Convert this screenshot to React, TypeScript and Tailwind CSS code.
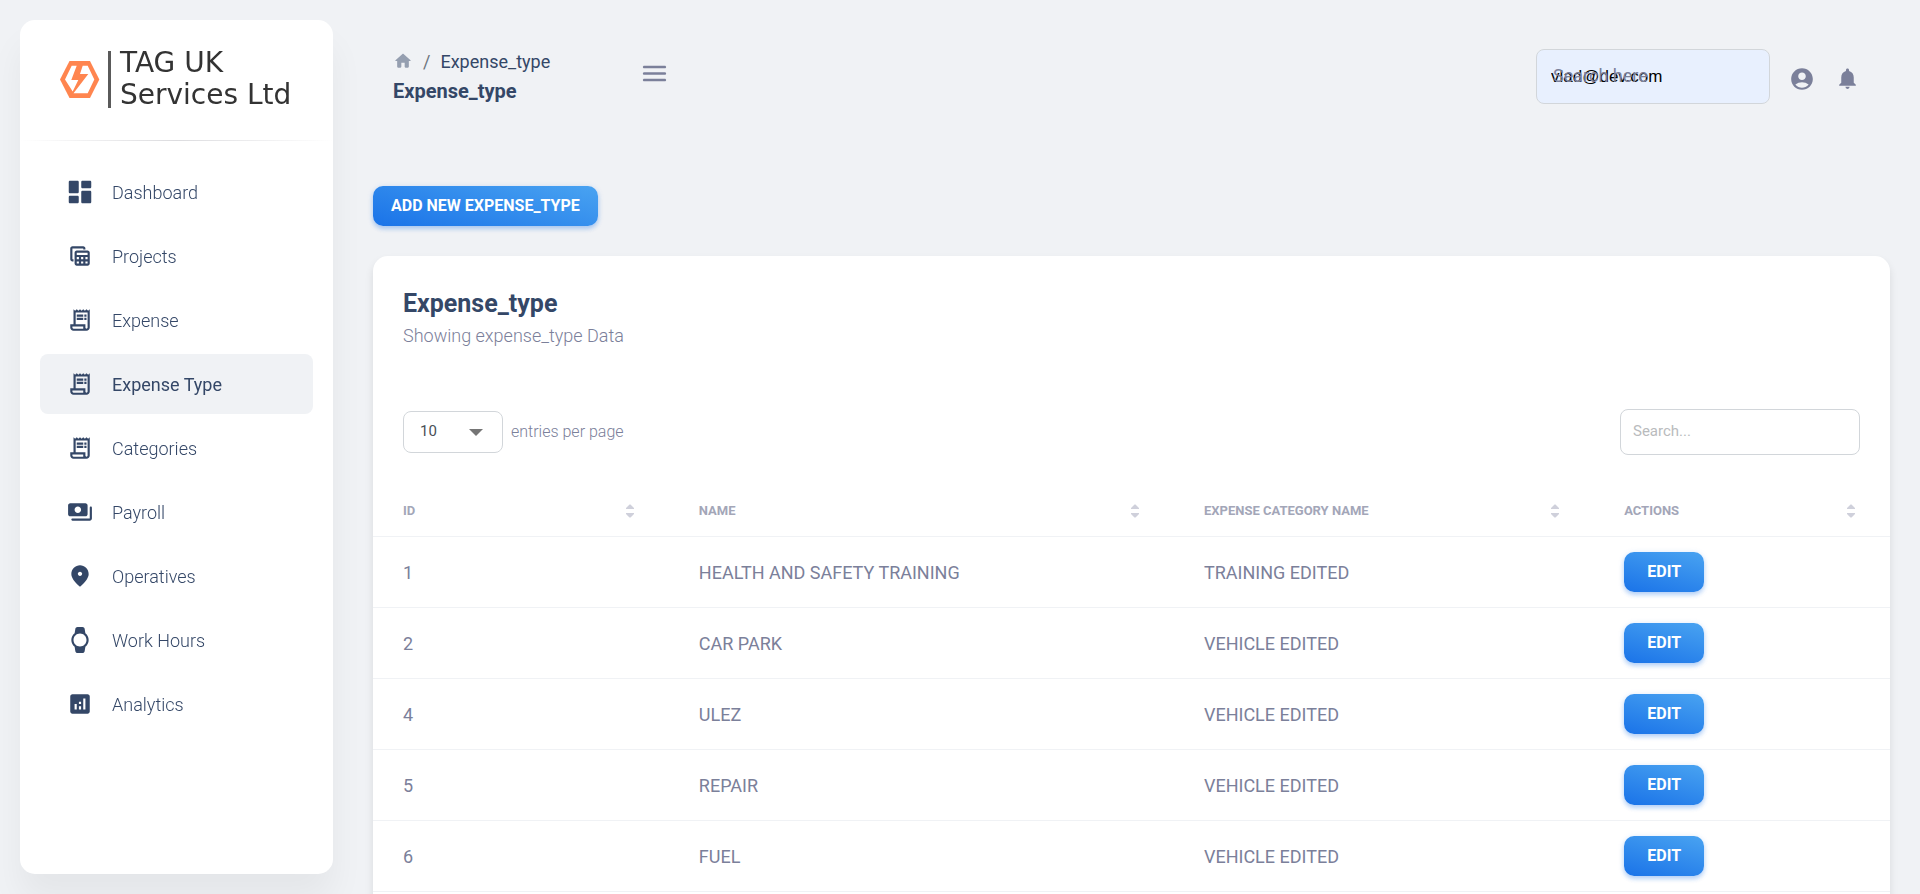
import type { ReactNode } from "react";
import {
  MdAccountCircle,
  MdAnalytics,
  MdNotifications,
  MdOutlineReceiptLong,
  MdTableView,
} from "react-icons/md";

type IconProps = { className?: string };

function Glyph({ className, children }: IconProps & { children: ReactNode }) {
  return (
    <svg viewBox="0 0 24 24" fill="currentColor" className={className} aria-hidden="true">
      {children}
    </svg>
  );
}

const DashboardIcon = ({ className }: IconProps) => (
  <Glyph className={className}>
    <path d="M4 13h6c.55 0 1-.45 1-1V4c0-.55-.45-1-1-1H4c-.55 0-1 .45-1 1v8c0 .55.45 1 1 1zm0 8h6c.55 0 1-.45 1-1v-4c0-.55-.45-1-1-1H4c-.55 0-1 .45-1 1v4c0 .55.45 1 1 1zm10 0h6c.55 0 1-.45 1-1v-8c0-.55-.45-1-1-1h-6c-.55 0-1 .45-1 1v8c0 .55.45 1 1 1zM13 4v4c0 .55.45 1 1 1h6c.55 0 1-.45 1-1V4c0-.55-.45-1-1-1h-6c-.55 0-1 .45-1 1z" />
  </Glyph>
);

const PaymentsIcon = ({ className }: IconProps) => (
  <Glyph className={className}>
    <path d="M19 14V6c0-1.100-.9-2-2-2H3c-1.100 0-2 .9-2 2v8c0 1.100.9 2 2 2h14c1.100 0 2-.9 2-2zm-9-1c-1.660 0-3-1.340-3-3s1.340-3 3-3 3 1.340 3 3-1.340 3-3 3zm13-5v10c0 1.100-.9 2-2 2H5c-.55 0-1-.45-1-1s.45-1 1-1h16V8c0-.55.45-1 1-1s1 .45 1 1z" />
  </Glyph>
);

const PinIcon = ({ className }: IconProps) => (
  <Glyph className={className}>
    <path d="M12 2c-4.200 0-8 3.220-8 8.200 0 3.320 2.670 7.250 8 11.800 5.330-4.550 8-8.480 8-11.800C20 5.220 16.200 2 12 2zm0 10c-1.100 0-2-.9-2-2s.9-2 2-2 2 .9 2 2-.9 2-2 2z" />
  </Glyph>
);

const WatchIcon = ({ className }: IconProps) => (
  <Glyph className={className}>
    <path d="M20 12c0-2.540-1.190-4.810-3.040-6.270l-.68-4.060C16.120.71 15.280 0 14.310 0H9.700c-.98 0-1.820.71-1.980 1.670l-.67 4.060C5.190 7.190 4 9.450 4 12s1.190 4.810 3.050 6.270l.67 4.060c.16.96 1 1.670 1.980 1.670h4.610c.98 0 1.810-.71 1.970-1.670l.68-4.060C18.810 16.810 20 14.540 20 12zM6 12c0-3.310 2.690-6 6-6s6 2.690 6 6-2.690 6-6 6-6-2.690-6-6z" />
  </Glyph>
);

const HomeIcon = ({ className }: IconProps) => (
  <Glyph className={className}>
    <path d="M10 19v-5h4v5c0 .55.45 1 1 1h3c.55 0 1-.45 1-1v-7h1.700c.46 0 .68-.57.33-.87L12.670 3.600c-.38-.34-.96-.34-1.340 0l-8.360 7.530c-.34.3-.13.87.33.87H5v7c0 .55.45 1 1 1h3c.55 0 1-.45 1-1z" />
  </Glyph>
);

const MenuIcon = ({ className }: IconProps) => (
  <Glyph className={className}>
    <path d="M4 18h16c.55 0 1-.45 1-1s-.45-1-1-1H4c-.55 0-1 .45-1 1s.45 1 1 1zm0-5h16c.55 0 1-.45 1-1s-.45-1-1-1H4c-.55 0-1 .45-1 1s.45 1 1 1zM3 7c0 .55.45 1 1 1h16c.55 0 1-.45 1-1s-.45-1-1-1H4c-.55 0-1 .45-1 1z" />
  </Glyph>
);

type NavEntry = {
  label: string;
  icon: (props: IconProps) => ReactNode;
  large?: boolean;
  active?: boolean;
};

const navEntries: NavEntry[] = [
  { label: "Dashboard", icon: DashboardIcon, large: true },
  { label: "Projects", icon: MdTableView },
  { label: "Expense", icon: MdOutlineReceiptLong },
  { label: "Expense Type", icon: MdOutlineReceiptLong, active: true },
  { label: "Categories", icon: MdOutlineReceiptLong },
  { label: "Payroll", icon: PaymentsIcon },
  { label: "Operatives", icon: PinIcon },
  { label: "Work Hours", icon: WatchIcon },
  { label: "Analytics", icon: MdAnalytics },
];

const columns = [
  { label: "ID", width: "w-[19.5%]" },
  { label: "Name", width: "w-[33.3%]" },
  { label: "Expense Category Name", width: "w-[27.7%]" },
  { label: "Actions", width: "w-[19.5%]" },
];

const rows = [
  { id: 1, name: "HEALTH AND SAFETY TRAINING", category: "TRAINING EDITED" },
  { id: 2, name: "CAR PARK", category: "VEHICLE EDITED" },
  { id: 4, name: "ULEZ", category: "VEHICLE EDITED" },
  { id: 5, name: "REPAIR", category: "VEHICLE EDITED" },
  { id: 6, name: "FUEL", category: "VEHICLE EDITED" },
];

const gradientButton =
  "h-10 rounded-[10px] bg-linear-[195deg,#49a3f1,#1a73e8] text-[16px] font-bold text-white uppercase shadow-[0_3px_4px_rgba(26,115,232,0.25),0_1px_6px_rgba(26,115,232,0.15)]";

function Logo() {
  return (
    <a href="#" className="flex items-center" aria-label="TAG UK Services Ltd">
      <svg viewBox="0 0 40 37" className="h-[37px] w-10 shrink-0" aria-hidden="true">
        <path fill="#ff854f" d="M9.500 0H30l9.300 18.500L30 37H9.500L0 18.500z" />
        <path
          fill="#fff"
          d="M11.700 4.700h5L11.300 19h7l-5.600 11.500L5 18.500zM22.700 4.700h5l6.600 13.800-6.600 13.800H13.500L28.300 13H20z"
        />
      </svg>
      <span className="ml-2 h-[57px] w-[3px] shrink-0 bg-[#5a5a5a]" />
      <span className="ml-[9px] font-['DejaVu_Sans',sans-serif] text-[28px] leading-8 whitespace-nowrap text-[#333]">
        TAG UK
        <br />
        Services Ltd
      </span>
    </a>
  );
}

function Sidebar() {
  return (
    <aside className="sticky top-5 m-5 h-[calc(100vh-40px)] w-[313px] shrink-0 rounded-[15px] bg-white shadow-[0_25px_34px_rgba(0,0,0,0.05)]">
      <div className="pt-[27px] pl-10">
        <Logo />
      </div>
      <hr className="mt-[29px] h-px border-0 bg-linear-to-r from-transparent via-[#dcdcdf] to-transparent" />
      <nav className="mt-[21px] flex flex-col gap-1 px-5">
        {navEntries.map(({ label, icon: Icon, large, active }) => (
          <a
            key={label}
            href="#"
            aria-current={active ? "page" : undefined}
            className={`flex h-[60px] items-center gap-4 rounded-lg pl-6 text-[18px] text-[#344767] ${
              active ? "bg-[#f0f2f5] font-normal" : "font-light"
            }`}
          >
            <span className="flex w-8 justify-center">
              <Icon className={large ? "size-[30px]" : "size-[26px]"} />
            </span>
            {label}
          </a>
        ))}
      </nav>
    </aside>
  );
}

function TopBar() {
  return (
    <header className="flex items-start pr-[30px] pl-5">
      <div className="w-[246px] pt-[29px]">
        <nav aria-label="Breadcrumb" className="flex h-6 items-center text-[18px] text-[#344767]">
          <a href="#" aria-label="Home" className="text-[#959fb0]">
            <HomeIcon className="size-5" />
          </a>
          <span className="mx-[10px] text-[#6c757d]">/</span>
          <span>Expense_type</span>
        </nav>
        <h6 className="mt-0.5 text-[20px] leading-8 font-bold text-[#344767]">Expense_type</h6>
      </div>
      <button type="button" aria-label="Toggle menu" className="mt-[38px] text-[#7b809a]">
        <MenuIcon className="size-[31px]" />
      </button>
      <div className="mt-[29px] ml-auto flex items-center text-[#7b809a]">
        <div className="relative">
          <input
            id="global-search"
            type="text"
            defaultValue="vlad@dev.com"
            className="h-[55px] w-[234px] rounded-lg border border-[#d2d6da] bg-[#e8f0fe] px-[14px] font-['Liberation_Sans',sans-serif] text-[17px] text-black outline-none"
          />
          <label htmlFor="global-search" className="pointer-events-none absolute top-[13px] left-[17px] text-[18px] leading-7">
            Search here
          </label>
        </div>
        <button type="button" aria-label="Account" className="ml-[19px] pt-1">
          <MdAccountCircle className="size-[26px]" />
        </button>
        <button type="button" aria-label="Notifications" className="ml-5 pt-1">
          <MdNotifications className="size-[25px]" />
        </button>
      </div>
    </header>
  );
}

function SortIcon() {
  return (
    <svg viewBox="0 0 8 14" className="h-[14px] w-2 fill-[#cfd0db]" aria-hidden="true">
      <path d="M3.500.5h1L8 4v1H0V4zM0 9h8v1l-3.500 3.500h-1L0 10z" />
    </svg>
  );
}

function DataTable() {
  return (
    <table className="w-full table-fixed border-collapse text-left">
      <thead>
        <tr className="border-b border-[#f0f2f5]">
          {columns.map(({ label, width }) => (
            <th key={label} className={`${width} px-[30px] pt-4 pb-[15px] text-[13px] leading-5 font-bold text-[#a3a6b8] uppercase`}>
              <div className="flex items-center justify-between pr-[5px]">
                {label}
                <SortIcon />
              </div>
            </th>
          ))}
        </tr>
      </thead>
      <tbody className="text-[18px] text-[#7b809a]">
        {rows.map((row) => (
          <tr key={row.id} className="h-[71px] border-b border-[#f0f2f5]">
            <td className="px-[30px]">{row.id}</td>
            <td className="px-[30px]">{row.name}</td>
            <td className="px-[30px]">{row.category}</td>
            <td className="px-[30px]">
              <button type="button" className={`${gradientButton} block w-20`}>
                Edit
              </button>
            </td>
          </tr>
        ))}
      </tbody>
    </table>
  );
}

export default function App() {
  return (
    <div className="flex h-screen overflow-hidden bg-[#f0f2f5] font-[Roboto,sans-serif]">
      <Sidebar />
      <main className="min-w-0 flex-1 pt-5 pr-[30px] pl-5">
        <TopBar />
        <button type="button" className={`${gradientButton} mt-[79px] px-[18px]`}>
          Add new expense_type
        </button>
        <section className="mt-[30px] rounded-[15px] bg-white pb-16 shadow-[0_5px_8px_rgba(0,0,0,0.1)]">
          <div className="px-[30px] pt-[31px]">
            <h5 className="text-[25px] leading-[34px] font-bold text-[#344767]">Expense_type</h5>
            <p className="text-[18px] leading-[30px] font-light text-[#7b809a]">Showing expense_type Data</p>
          </div>
          <div className="mt-[58px] flex items-center justify-between px-[30px]">
            <div className="flex items-center">
              <div className="relative">
                <select
                  id="page-size"
                  defaultValue="10"
                  className="h-[42px] w-[100px] appearance-none rounded-lg border border-[#d2d6da] bg-white pb-0.5 pl-4 text-[15px] text-[#495057]"
                >
                  <option>10</option>
                  <option>25</option>
                </select>
                <svg viewBox="0 0 14 7" className="pointer-events-none absolute top-[18px] right-5 h-[7px] w-[14px] fill-[#757575]" aria-hidden="true">
                  <path d="M0 0h14L7 7z" />
                </svg>
              </div>
              <label htmlFor="page-size" className="ml-2 text-[16px] font-light text-[#7b809a]">
                entries per page
              </label>
            </div>
            <input
              type="search"
              aria-label="Search table"
              placeholder="Search..."
              className="h-[46px] w-60 rounded-lg border border-[#d2d6da] bg-white px-3 pb-0.5 text-[15px] outline-none placeholder:text-[#b9bbbd]"
            />
          </div>
          <div className="mt-[30px]">
            <DataTable />
          </div>
        </section>
      </main>
    </div>
  );
}
